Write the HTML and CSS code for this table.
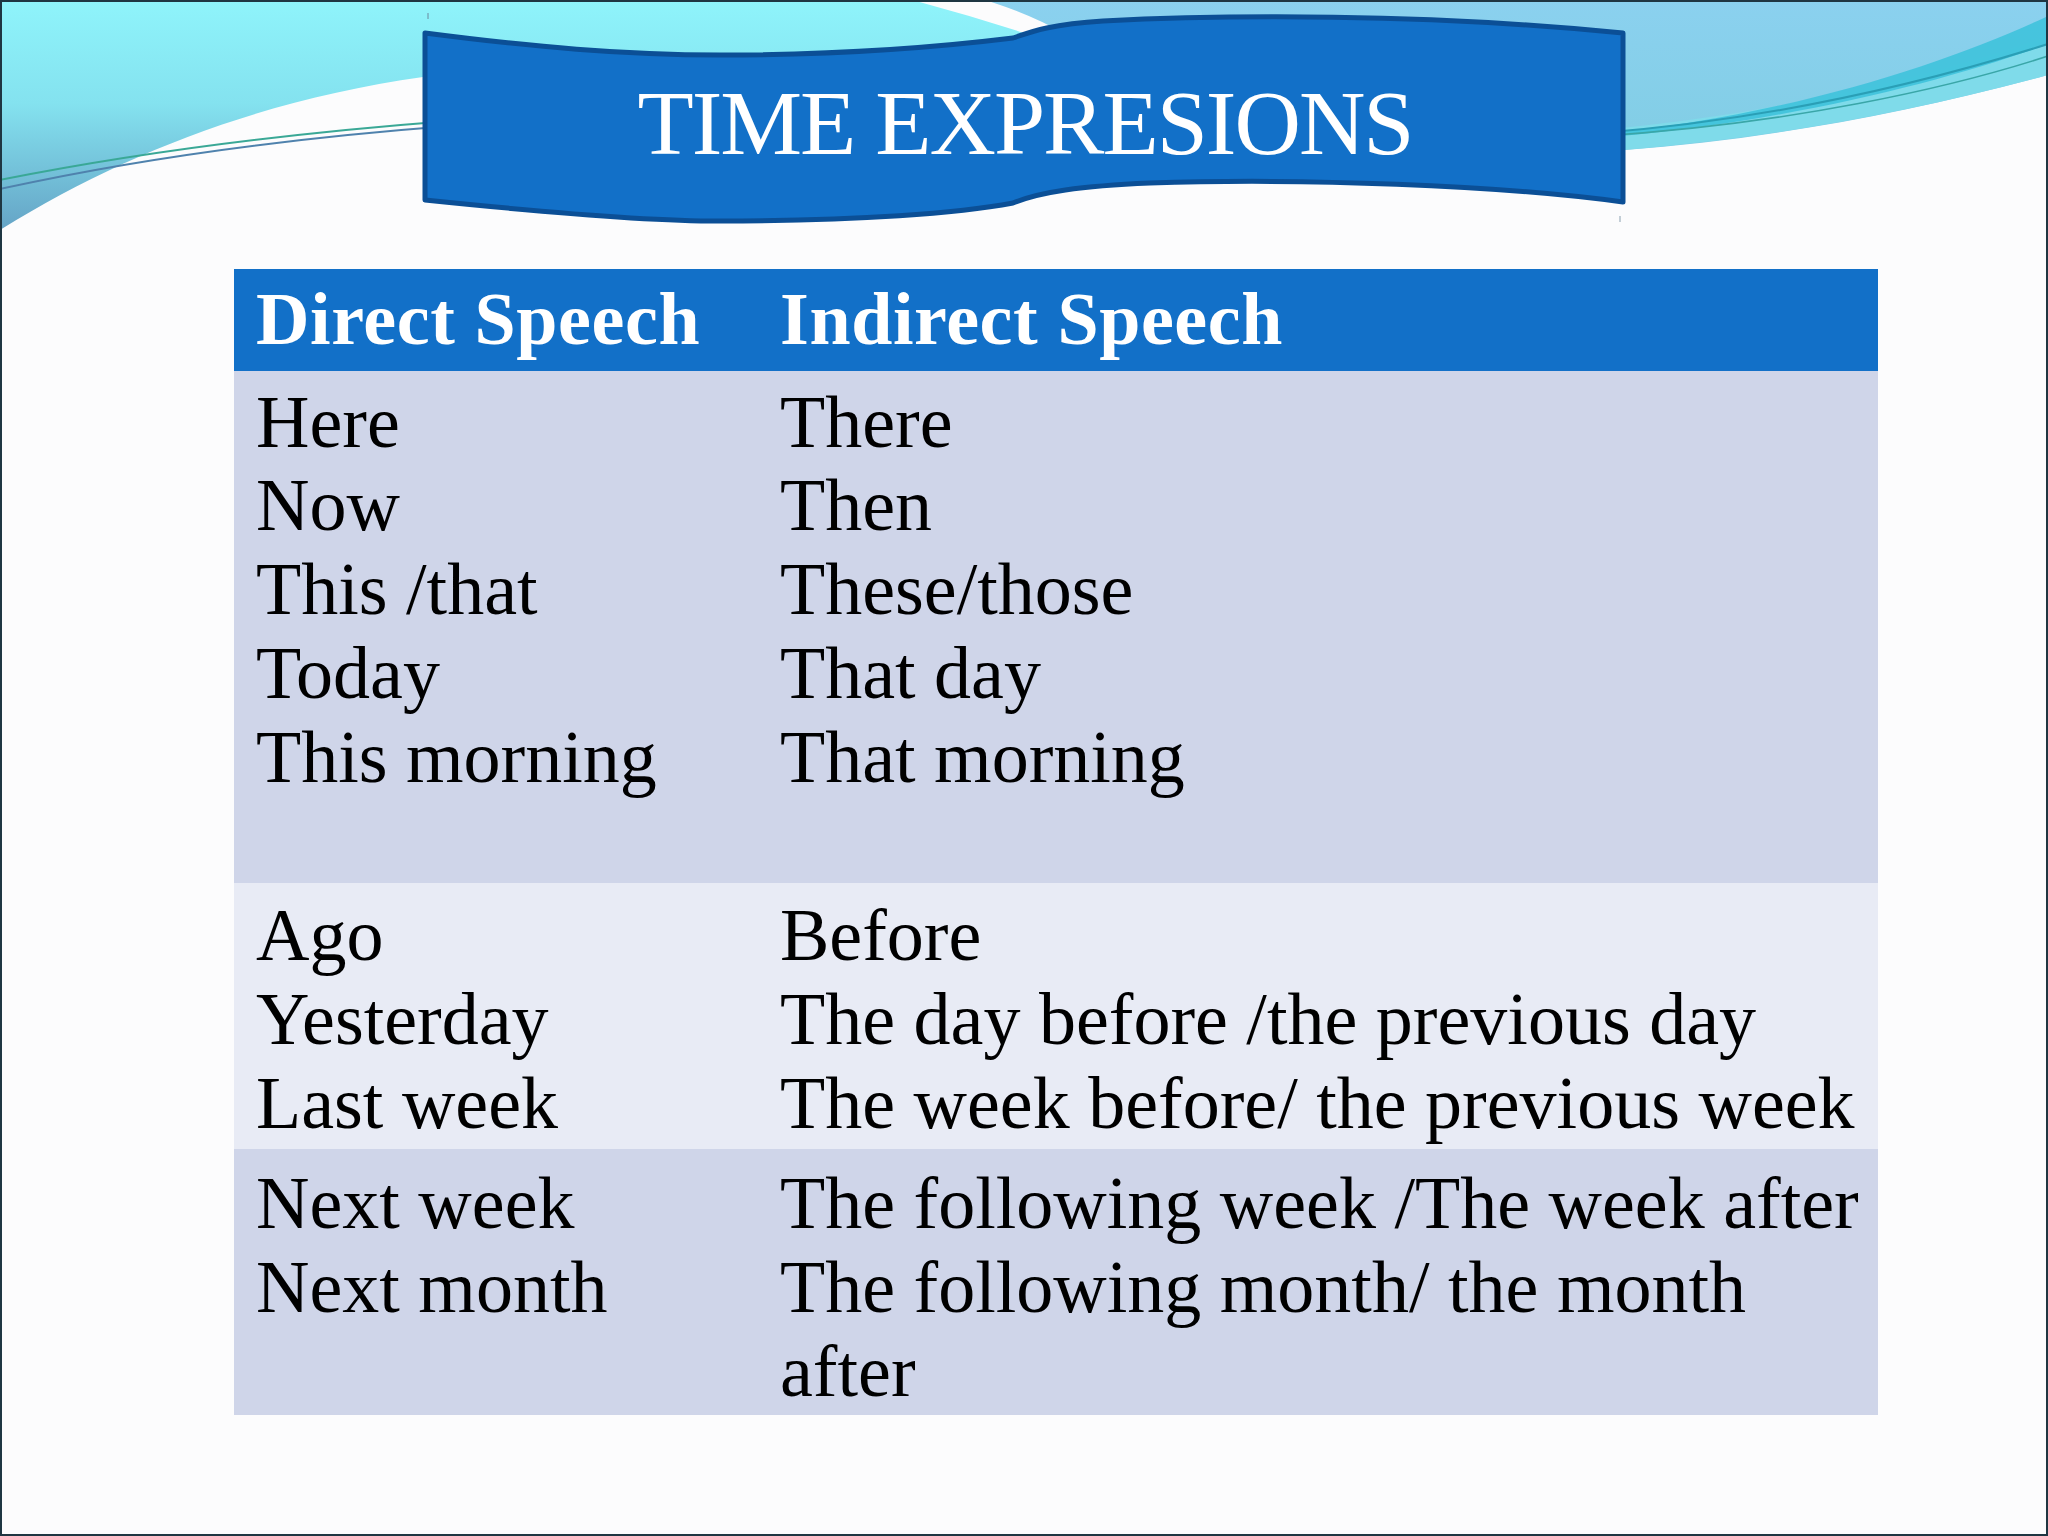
FILE: index.html
```html
<!DOCTYPE html>
<html lang="en">
<head>
<meta charset="utf-8">
<title>Time Expressions</title>
<link rel="stylesheet" href="styles.css">
</head>
<body>
<div class="slide">
  <svg class="backdrop" viewBox="0 0 2048 1536" width="2048" height="1536" aria-hidden="true">
    <defs>
      <linearGradient id="cyanGrad" x1="0" y1="0" x2="0" y2="1">
        <stop offset="0" stop-color="#8ff4fb"/>
        <stop offset="0.45" stop-color="#84e2ef"/>
        <stop offset="1" stop-color="#65a4c6"/>
      </linearGradient>
      <linearGradient id="blueGrad" x1="0" y1="0" x2="0" y2="1">
        <stop offset="0" stop-color="#8bd1ef"/>
        <stop offset="1" stop-color="#80cde3"/>
      </linearGradient>
    </defs>
    <path d="M0,0 L912,0 Q980,18 1045,40 L1045,46 Q720,52 423,77 C260,100 120,155 0,230 Z" fill="url(#cyanGrad)"/>
    <path d="M985,0 L2048,0 L2048,75 C1900,115 1760,140 1625,150 L1300,170 L1065,34 Q1030,14 985,0 Z" fill="url(#blueGrad)"/>
    <path d="M1600,130 C1780,114 1940,74 2048,36 L2048,75 C1900,115 1760,140 1600,152 Z" fill="#7fdbea"/>
    <path d="M1600,134 C1790,116 1950,62 2048,16 L2048,44 C1950,80 1790,122 1600,138 Z" fill="#3fc2dc" opacity="0.9"/>
    <path d="M1600,133 C1790,118 1950,75 2048,44" fill="none" stroke="#2a9fb6" stroke-width="2"/>
    <path d="M1600,136 C1790,124 1950,88 2048,56" fill="none" stroke="#3aa6a8" stroke-width="1.5"/>
    <path d="M0,180 Q200,140 450,121" fill="none" stroke="#3aa896" stroke-width="2"/>
    <path d="M0,189 Q200,145 450,126" fill="none" stroke="#4f82ad" stroke-width="2"/>
    <line x1="428" y1="13" x2="428" y2="19" stroke="#6a8aa0" stroke-width="1"/>
    <line x1="1620" y1="216" x2="1620" y2="222" stroke="#8aa0b0" stroke-width="1"/>
  </svg>

  <header class="banner">
    <svg class="banner-shape" viewBox="0 0 1204 212" width="1204" height="212" aria-hidden="true">
      <path d="M2,21 C110,35 200,43 297,43 C400,43 500,37 590,26 C610,19 630,12 680,9 C800,3 1000,1 1200,21 L1200,190 C1077,173 877,166 727,171 C657,174 617,180 590,191 C537,201 437,209 297,209 C227,209 137,202 2,188 Z" fill="#1270c8" stroke="#0b4f96" stroke-width="5" stroke-linejoin="round"/>
    </svg>
    <h1 class="title">TIME EXPRESIONS</h1>
  </header>

  <section class="table">
    <div class="group head">
      <div class="cell">Direct Speech</div>
      <div class="cell">Indirect Speech</div>
    </div>
    <div class="group g1">
      <div class="cell">
        <div class="line">Here</div>
        <div class="line">Now</div>
        <div class="line">This /that</div>
        <div class="line">Today</div>
        <div class="line">This morning</div>
      </div>
      <div class="cell">
        <div class="line">There</div>
        <div class="line">Then</div>
        <div class="line">These/those</div>
        <div class="line">That day</div>
        <div class="line">That morning</div>
      </div>
    </div>
    <div class="group g2">
      <div class="cell">
        <div class="line">Ago</div>
        <div class="line">Yesterday</div>
        <div class="line">Last week</div>
      </div>
      <div class="cell">
        <div class="line">Before</div>
        <div class="line">The day before /the previous day</div>
        <div class="line">The week before/ the previous week</div>
      </div>
    </div>
    <div class="group g3">
      <div class="cell">
        <div class="line">Next week</div>
        <div class="line">Next month</div>
      </div>
      <div class="cell">
        <div class="line">The following week /The week after</div>
        <div class="line">The following month/ the month</div>
        <div class="line">after</div>
      </div>
    </div>
  </section>
</div>
</body>
</html>
```

FILE: styles.css
```css
* {
  box-sizing: border-box;
}

html, body {
  margin: 0;
  padding: 0;
  background: #fcfcfd;
}

.slide {
  position: relative;
  width: 2048px;
  height: 1536px;
  border: 2px solid #1f3642;
  background: #fcfcfd;
  overflow: hidden;
  display: flex;
  flex-direction: column;
  font-family: "Liberation Serif", "Times New Roman", serif;
}

.backdrop {
  position: absolute;
  left: -2px;
  top: -2px;
  z-index: 0;
}

.banner {
  position: relative;
  z-index: 1;
  width: 1204px;
  height: 212px;
  margin: 10px 0 0 421px;
  display: flex;
  justify-content: center;
}

.banner-shape {
  position: absolute;
  left: 0;
  top: 0;
  overflow: visible;
}

.title {
  position: relative;
  margin: 0;
  padding-top: 65px;
  font-weight: normal;
  font-size: 92px;
  line-height: 92px;
  letter-spacing: -2px;
  color: #ffffff;
  white-space: nowrap;
}

.table {
  position: relative;
  z-index: 1;
  width: 1644px;
  margin: 45px 0 0 232px;
  display: flex;
  flex-direction: column;
  font-size: 74px;
  line-height: 83.7px;
  color: #000;
}

.group {
  display: grid;
  grid-template-columns: 524px 1fr;
}

.cell {
  padding-left: 22px;
  white-space: nowrap;
}

.head {
  background: #1270c8;
  color: #fff;
  font-weight: bold;
  letter-spacing: 0.6px;
  padding: 9px 0 9px;
}

.g1 {
  background: #cfd5e9;
  padding: 10px 0 84px;
}

.g2 {
  background: #e8ebf5;
  padding: 11px 0 4px;
}

.g3 {
  background: #cfd5e9;
  padding: 13px 0 2px;
}
```
